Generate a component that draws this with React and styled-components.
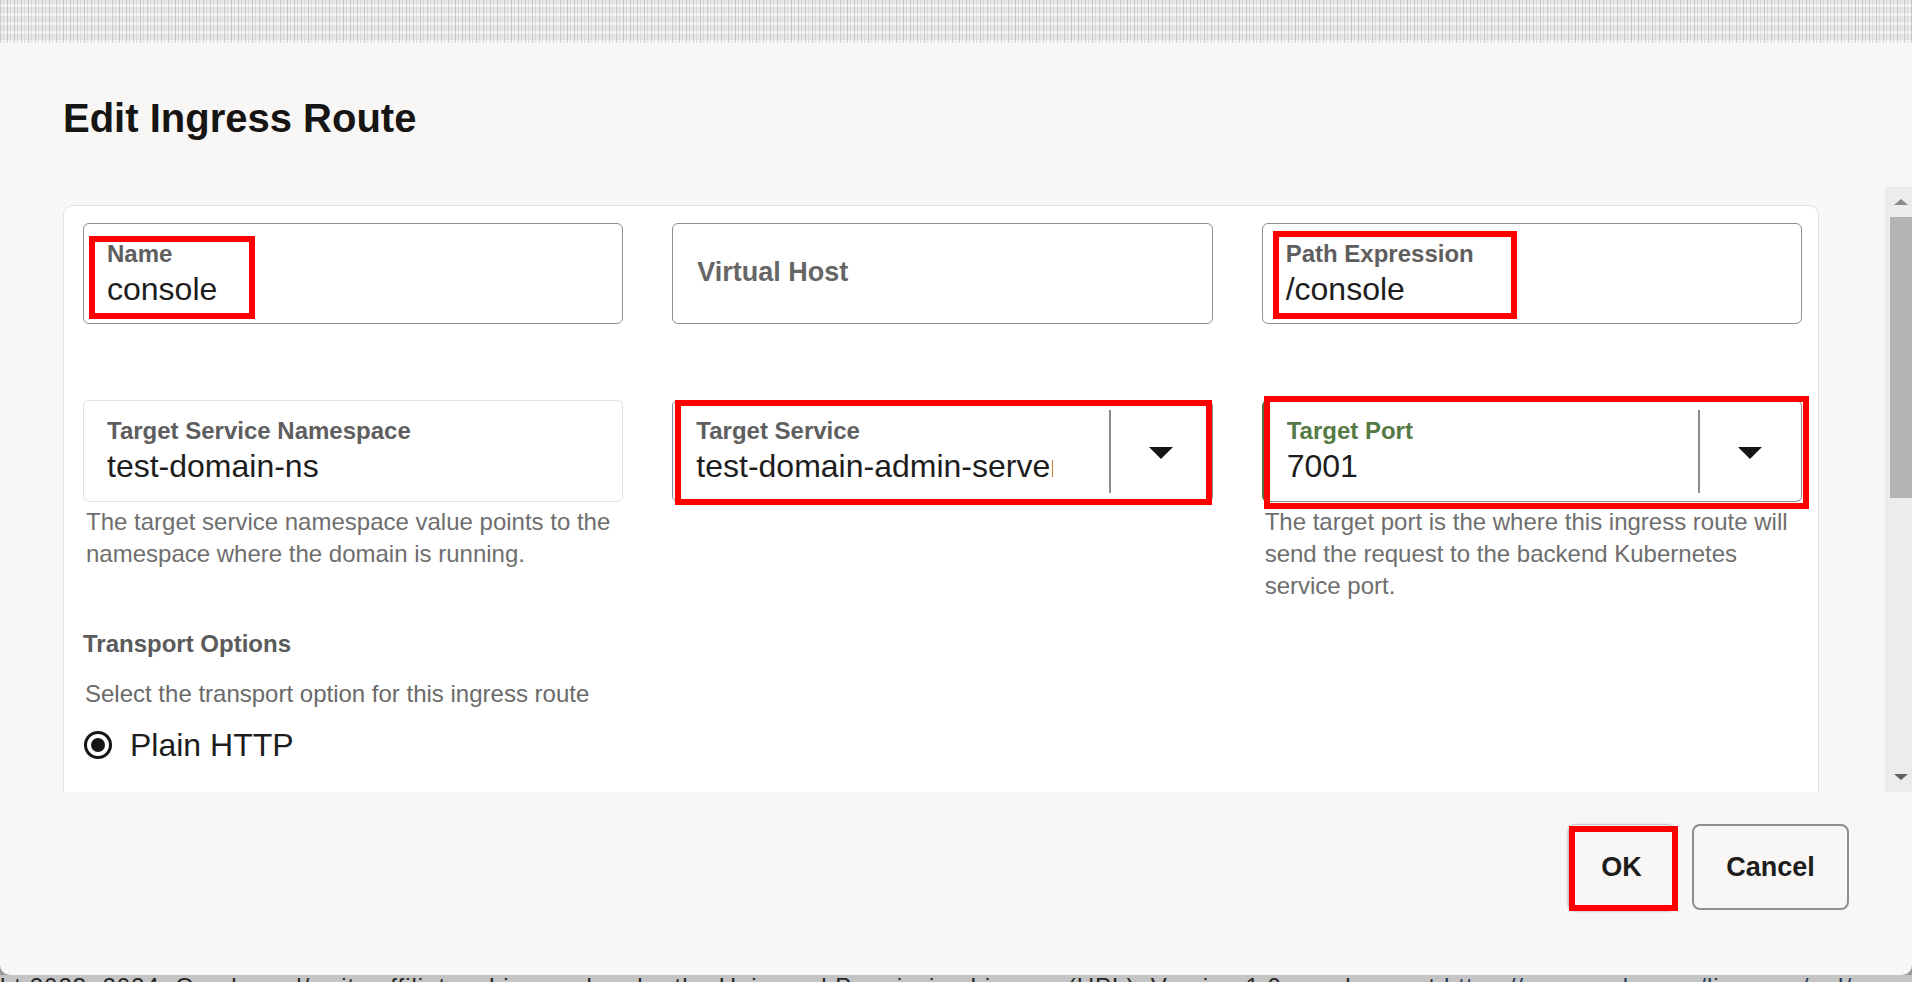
import React from 'react';
import styled, { createGlobalStyle } from 'styled-components';

const GlobalStyle = createGlobalStyle`
  html, body { margin: 0; padding: 0; }
  body {
    font-family: "Liberation Sans", Arial, sans-serif;
    background: #bdbdbd;
    overflow: hidden;
  }
  *, *::before, *::after { box-sizing: border-box; }
`;

const Page = styled.div`
  width: 1912px;
  height: 982px;
  display: flex;
  flex-direction: column;
  overflow: hidden;
  background: #9a9a9a;
`;

const Backdrop = styled.div`
  height: 43px;
  flex: none;
  background-color: #e6e6e6;
  background-image:
    repeating-linear-gradient(90deg, rgba(110,110,110,0.28) 0 1px, transparent 1px 3px, rgba(150,150,150,0.22) 3px 4px, transparent 4px 7px),
    repeating-linear-gradient(0deg, rgba(255,255,255,0.6) 0 3px, transparent 3px 9px);
`;

const Dialog = styled.div`
  height: 932px;
  flex: none;
  background: #f9f7f5;
  border-radius: 0 0 10px 10px;
  display: flex;
  flex-direction: column;
`;

const Header = styled.div`
  padding: 51px 63px 45px;
`;

const Title = styled.h1`
  margin: 0;
  font-size: 40px;
  line-height: 48px;
  font-weight: 700;
  color: #161513;
`;

const Body = styled.div`
  height: 605px;
  flex: none;
  display: flex;
  padding-left: 63px;
`;

const ScrollContent = styled.div`
  flex: 1;
  min-width: 0;
  overflow: hidden;
  padding-top: 18px;
  margin-right: 66px;
`;

const Card = styled.div`
  background: #ffffff;
  border: 1px solid #e4e1de;
  border-radius: 10px;
  padding: 17px 16px 60px 19px;
`;

const Grid = styled.div`
  display: grid;
  grid-template-columns: repeat(3, 1fr);
  column-gap: 49px;
  row-gap: 76px;
  align-items: start;
`;

const Cell = styled.div`
  display: flex;
  flex-direction: column;
  min-width: 0;
`;

const FieldBox = styled.div`
  position: relative;
  height: ${p => p.$h || 101}px;
  border: 1px solid ${p => (p.$readonly ? '#e3e1df' : '#8f8f8f')};
  ${p => (p.$accent ? `border-left: 2px solid ${p.$accent};` : '')}
  border-radius: 6px;
  background: #ffffff;
  display: flex;
  align-items: ${p => (p.$center ? 'center' : 'stretch')};
  padding-left: 23px;
`;

const FieldText = styled.div`
  flex: 1;
  min-width: 0;
  padding-top: 16px;
  overflow: hidden;
  margin-right: ${p => p.$mr || 20}px;
`;

const Label = styled.div`
  font-size: 24px;
  line-height: 28px;
  font-weight: 700;
  color: ${p => p.$color || '#5e5e5e'};
  white-space: nowrap;
`;

const Placeholder = styled.div`
  font-size: 27px;
  line-height: 32px;
  font-weight: 700;
  color: #666666;
  padding-left: 1px;
  margin-top: -3px;
`;

const Value = styled.div`
  font-size: 32px;
  line-height: 38px;
  color: #1d1d1d;
  margin-top: 2px;
  white-space: nowrap;
  overflow: hidden;
`;

const DropButton = styled.div`
  width: 103px;
  flex: none;
  display: flex;
  align-items: center;
  justify-content: center;
  border-left: 2px solid #8c8c8c;
  margin: 9px 0 8px;
`;

const Caret = styled.div`
  width: 0;
  height: 0;
  border-left: 12px solid transparent;
  border-right: 12px solid transparent;
  border-top: 12px solid #161513;
  margin-top: 2px;
`;

const Help = styled.div`
  font-size: 24px;
  line-height: 32px;
  color: #6e6e6e;
  padding: 4px 0 0 3px;
`;

const Mark = styled.div`
  position: absolute;
  left: ${p => p.$l}px;
  top: ${p => p.$t}px;
  width: ${p => p.$w}px;
  height: ${p => p.$h}px;
  border: 6px solid #ff0000;
  pointer-events: none;
  z-index: 2;
`;

const Section = styled.div`
  margin-top: 28px;
`;

const SectionLabel = styled.div`
  font-size: 24px;
  line-height: 28px;
  font-weight: 700;
  color: #5a5a5a;
`;

const SectionHint = styled.div`
  font-size: 24px;
  line-height: 32px;
  color: #6a6a6a;
  margin-top: 20px;
  padding-left: 2px;
`;

const RadioRow = styled.label`
  display: flex;
  align-items: center;
  gap: 18px;
  margin-top: 16px;
  padding-left: 1px;
`;

const RadioOuter = styled.span`
  width: 28px;
  height: 28px;
  border-radius: 50%;
  border: 3px solid #161513;
  display: flex;
  align-items: center;
  justify-content: center;
  background: #fff;
  flex: none;
`;

const RadioDot = styled.span`
  width: 14px;
  height: 14px;
  border-radius: 50%;
  background: #161513;
`;

const RadioText = styled.span`
  font-size: 32px;
  line-height: 38px;
  color: #1d1d1d;
`;

const Scrollbar = styled.div`
  width: 27px;
  flex: none;
  background: #ececec;
  display: flex;
  flex-direction: column;
  align-items: flex-end;
`;

const ScrollArrow = styled.div`
  height: 30px;
  width: 22px;
  display: flex;
  align-items: center;
  justify-content: center;
`;

const ArrowUp = styled.div`
  width: 0;
  height: 0;
  border-left: 7px solid transparent;
  border-right: 7px solid transparent;
  border-bottom: 6px solid #8a8a8a;
`;

const ArrowDown = styled.div`
  width: 0;
  height: 0;
  border-left: 7px solid transparent;
  border-right: 7px solid transparent;
  border-top: 6px solid #5e5e5e;
`;

const Thumb = styled.div`
  width: 22px;
  height: 281px;
  background: #b3b3b3;
`;

const Spacer = styled.div`
  flex: 1;
`;

const Footer = styled.div`
  display: flex;
  justify-content: flex-end;
  gap: 17px;
  padding: 32px 63px 0;
`;

const ButtonWrap = styled.div`
  position: relative;
`;

const Button = styled.button`
  height: 86px;
  width: ${p => p.$w}px;
  border-radius: 8px;
  background: #f9f7f5;
  border: ${p => (p.$outlined ? '2px solid #8e8e8e' : '1px solid #c9c6c3')};
  box-shadow: ${p => (p.$outlined ? 'none' : '0 1px 3px rgba(0,0,0,0.35)')};
  font-family: "Liberation Sans", Arial, sans-serif;
  font-size: 27px;
  font-weight: 700;
  color: #1d1d1d;
  padding: 0;
  cursor: pointer;
`;

const BottomStrip = styled.div`
  height: 7px;
  flex: none;
  overflow: hidden;
  background: #c4c4c4;
  white-space: nowrap;
  font-size: 24px;
  line-height: 28px;
  color: #262626;
`;

const StripText = styled.div`
  margin-top: -2px;
  letter-spacing: 1px;
`;

const StripLink = styled.span`
  color: #213a55;
`;

function TextField({ label, value, readonly, markBox }) {
  return (
    <FieldBox $readonly={readonly} $h={readonly ? 102 : 101}>
      <FieldText>
        <Label>{label}</Label>
        <Value>{value}</Value>
      </FieldText>
      {markBox && <Mark {...markBox} />}
    </FieldBox>
  );
}

function SelectField({ label, value, labelColor, accent, markBox }) {
  return (
    <FieldBox $h={102} $accent={accent}>
      <FieldText $mr={56}>
        <Label $color={labelColor}>{label}</Label>
        <Value>{value}</Value>
      </FieldText>
      <DropButton>
        <Caret />
      </DropButton>
      {markBox && <Mark {...markBox} />}
    </FieldBox>
  );
}

export default function App() {
  return (
    <>
      <GlobalStyle />
      <Page>
        <Backdrop />
        <Dialog>
          <Header>
            <Title>Edit Ingress Route</Title>
          </Header>
          <Body>
            <ScrollContent>
              <Card>
                <Grid>
                  <Cell>
                    <TextField
                      label="Name"
                      value="console"
                      markBox={{ $l: 5, $t: 12, $w: 166, $h: 83 }}
                    />
                  </Cell>
                  <Cell>
                    <FieldBox $center>
                      <Placeholder>Virtual Host</Placeholder>
                    </FieldBox>
                  </Cell>
                  <Cell>
                    <TextField
                      label="Path Expression"
                      value="/console"
                      markBox={{ $l: 10, $t: 7, $w: 244, $h: 88 }}
                    />
                  </Cell>
                  <Cell>
                    <TextField
                      label="Target Service Namespace"
                      value="test-domain-ns"
                      readonly
                    />
                    <Help>
                      The target service namespace value points to the
                      <br />
                      namespace where the domain is running.
                    </Help>
                  </Cell>
                  <Cell>
                    <SelectField
                      label="Target Service"
                      value="test-domain-admin-server"
                      markBox={{ $l: 2, $t: -1, $w: 537, $h: 105 }}
                    />
                  </Cell>
                  <Cell>
                    <SelectField
                      label="Target Port"
                      value="7001"
                      labelColor="#557a44"
                      accent="#4f6e42"
                      markBox={{ $l: 0, $t: -5, $w: 545, $h: 113 }}
                    />
                    <Help>
                      The target port is the where this ingress route will
                      <br />
                      send the request to the backend Kubernetes
                      <br />
                      service port.
                    </Help>
                  </Cell>
                </Grid>
                <Section>
                  <SectionLabel>Transport Options</SectionLabel>
                  <SectionHint>Select the transport option for this ingress route</SectionHint>
                  <RadioRow>
                    <RadioOuter>
                      <RadioDot />
                    </RadioOuter>
                    <RadioText>Plain HTTP</RadioText>
                  </RadioRow>
                </Section>
              </Card>
            </ScrollContent>
            <Scrollbar>
              <ScrollArrow>
                <ArrowUp />
              </ScrollArrow>
              <Thumb />
              <Spacer />
              <ScrollArrow>
                <ArrowDown />
              </ScrollArrow>
            </Scrollbar>
          </Body>
          <Footer>
            <ButtonWrap>
              <Button $w={107}>OK</Button>
              <Mark $l={1} $t={2} $w={109} $h={85} />
            </ButtonWrap>
            <ButtonWrap>
              <Button $w={157} $outlined>Cancel</Button>
            </ButtonWrap>
          </Footer>
        </Dialog>
        <BottomStrip>
          <StripText>
            ht 2023, 2024, Oracle and/or its affiliates. Licensed under the Universal Permissive License (UPL), Version 1.0, as shown at{' '}
            <StripLink>https://oss.oracle.com/licenses/upl/</StripLink>
          </StripText>
        </BottomStrip>
      </Page>
    </>
  );
}
